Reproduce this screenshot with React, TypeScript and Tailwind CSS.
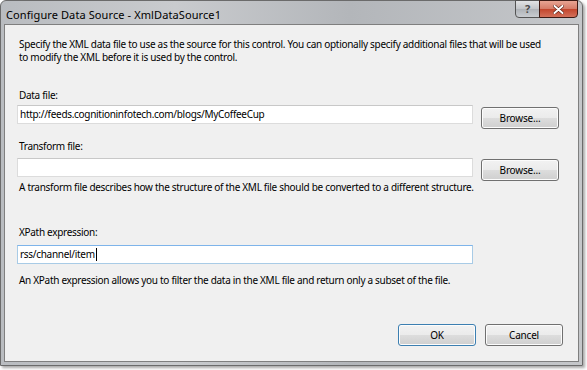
import React from 'react';

const FONT = { fontFamily: '"Segoe UI", "Noto Sans", "Open Sans", sans-serif' };

function WinButton({ label, primary }: { label: string; primary?: boolean }) {
    return (
        <button
            type="button"
            className={`h-[22px] w-[78px] rounded-[3px] border text-[10px] tracking-[-0.2px] text-black bg-[linear-gradient(#f2f2f2_0%,#ebebeb_50%,#dddddd_50%,#cfcfcf_100%)] shadow-[inset_0_0_0_1px_#fcfcfc] ${primary ? 'border-[#3c7fb1] shadow-[inset_0_0_0_1px_#48d4f7]' : 'border-[#707070]'}`}
        >
            {label}
        </button>
    );
}

function TextBox({ value, focused, caret }: { value?: string; focused?: boolean; caret?: boolean }) {
    return (
        <div
            className={`h-[19px] w-[456px] bg-white border flex items-center px-[2px] text-black ${focused ? 'border-[#a8cbe6] border-t-[#7eb4ea]' : 'border-[#dcdcdc] border-t-[#c8c8c8]'}`}
        >
            <span>{value}</span>
            {caret && <span className="ml-[1px] h-[13px] w-px bg-black" />}
        </div>
    );
}

export default function App() {
    return (
        <div className="w-[587px] h-[370px] bg-white" style={FONT}>
            <div className="w-[583px] h-[366px] flex flex-col rounded-t-[6px] border border-[#6b6b6b] bg-[linear-gradient(90deg,#b9bcc0,#c9cbce_30%,#b3b6ba_60%,#c5c7ca)] shadow-[2px_2px_3px_rgba(0,0,0,0.35)]">
                {/* title bar */}
                <div className="h-[23px] flex items-start shrink-0 pl-[5px] pr-[4px]">
                    <span className="mt-[7px] text-[11px] leading-[14px] tracking-[0.1px] text-black">Configure Data Source - XmlDataSource1</span>
                    <div className="ml-auto flex -mt-px">
                        <div className="h-[18px] w-[25px] rounded-bl-[4px] border border-[#545454] bg-[linear-gradient(#e2e3e5,#c2c5c9_50%,#aeb2b7_50%,#c9ccd0)] flex items-center justify-center text-[11px] font-bold text-[#4a4a4a]">?</div>
                        <div className="h-[18px] w-[39px] -ml-px rounded-br-[4px] border border-[#3d1a14] bg-[linear-gradient(#e8a493,#d57a66_50%,#c2442b_50%,#d3705a)] flex items-center justify-center">
                            <svg width="11" height="9" viewBox="0 0 11 9">
                                <path d="M1.5 1 L9.5 8 M9.5 1 L1.5 8" stroke="#5a1e12" strokeWidth="3.2" strokeLinecap="round" />
                                <path d="M1.5 1 L9.5 8 M9.5 1 L1.5 8" stroke="#ffffff" strokeWidth="2" strokeLinecap="round" />
                            </svg>
                        </div>
                    </div>
                </div>

                {/* client area */}
                <div className="flex-1 mx-[3px] mb-[3px] border border-[#7f7f7f] bg-[#f0f0f0] pl-[12px] text-[10px] tracking-[-0.3px] leading-[13px] text-black flex flex-col">
                    <p className="pl-[2px] pt-[13px] w-[528px]">
                        Specify the XML data file to use as the source for this control. You can optionally specify additional files that will be used to modify the XML before it is used by the control.
                    </p>

                    <label className="pl-[2px] mt-[25px]">Data file:</label>
                    <div className="flex items-start gap-[8px] mt-[3px]">
                        <TextBox value="http://feeds.cognitioninfotech.com/blogs/MyCoffeeCup" />
                        <div className="mt-[2px]"><WinButton label="Browse..." /></div>
                    </div>

                    <label className="pl-[2px] mt-[11px]">Transform file:</label>
                    <div className="flex items-start gap-[8px] mt-[5px]">
                        <TextBox />
                        <div className="mt-[1px]"><WinButton label="Browse..." /></div>
                    </div>
                    <p className="pl-[2px]">A transform file describes how the structure of the XML file should be converted to a different structure.</p>

                    <label className="pl-[2px] mt-[32px]">XPath expression:</label>
                    <div className="mt-[6px]">
                        <TextBox value="rss/channel/item" focused caret />
                    </div>
                    <p className="pl-[2px] mt-[10px]">An XPath expression allows you to filter the data in the XML file and return only a subset of the file.</p>

                    <div className="mt-auto mb-[15px] flex justify-end gap-[9px] pr-[15px]">
                        <WinButton label="OK" primary />
                        <WinButton label="Cancel" />
                    </div>
                </div>
            </div>
        </div>
    );
}
